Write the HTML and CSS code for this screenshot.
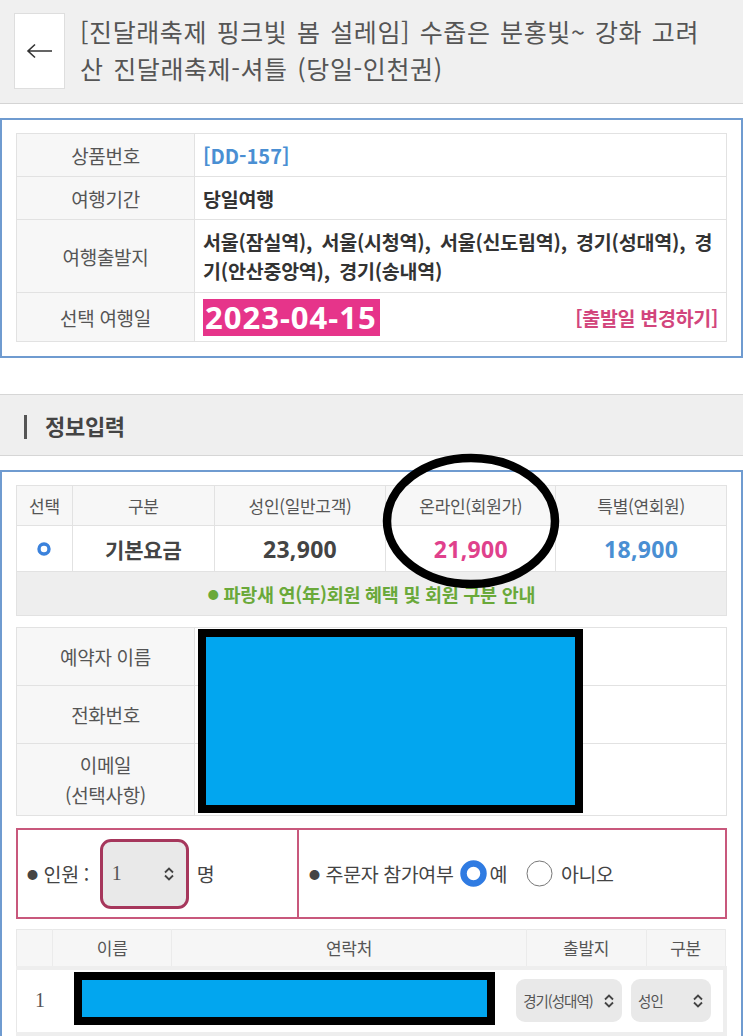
FILE: index.html
```html
<!DOCTYPE html>
<html lang="ko">
<head>
<meta charset="utf-8">
<title>정보입력</title>
<link rel="stylesheet" href="styles.css">
</head>
<body>
<header class="header">
  <div class="back"><svg width="28" height="16" viewBox="0 0 28 16"><path d="M2 8 H26 M9 1.5 L2 8 L9 14.5" fill="none" stroke="#333" stroke-width="1.6"/></svg></div>
  <h1 class="title">[진달래축제 핑크빛 봄 설레임] 수줍은 분홍빛~ 강화 고려산 진달래축제-셔틀 (당일-인천권)</h1>
</header>

<section class="box box-top">
  <table class="info">
    <tr class="r1"><th>상품번호</th><td><span class="code">[DD-157]</span></td></tr>
    <tr class="r2"><th>여행기간</th><td class="val">당일여행</td></tr>
    <tr class="r3"><th>여행출발지</th><td class="val multi">서울(잠실역), 서울(시청역), 서울(신도림역), 경기(성대역), 경기(안산중앙역), 경기(송내역)</td></tr>
    <tr class="r4"><th>선택 여행일</th><td><div class="daterow"><span class="date">2023-04-15</span><span class="change">[출발일 변경하기]</span></div></td></tr>
  </table>
</section>

<div class="sec-head"><span class="bar"></span><span class="sec-title">정보입력</span></div>

<section class="box box-form">
  <table class="price">
    <colgroup><col class="c1"><col class="c2"><col class="c3"><col class="c4"><col class="c5"></colgroup>
    <tr class="ph"><th>선택</th><th>구분</th><th>성인(일반고객)</th><th>온라인(회원가)</th><th>특별(연회원)</th></tr>
    <tr class="pd">
      <td><svg class="dot" width="14" height="14" viewBox="0 0 14 14"><circle cx="7" cy="7" r="5" fill="#fff" stroke="#3b82dc" stroke-width="3.4"/></svg></td>
      <td class="kind">기본요금</td>
      <td class="num">23,900</td>
      <td class="num pink">21,900</td>
      <td class="num blue">18,900</td>
    </tr>
    <tr class="pn"><td colspan="5"><span class="gbul">●</span> 파랑새 연(年)회원 혜택 및 회원 구분 안내</td></tr>
  </table>

  <table class="info person">
    <tr class="q1"><th>예약자 이름</th><td></td></tr>
    <tr class="q2"><th>전화번호</th><td></td></tr>
    <tr class="q3"><th>이메일<br>(선택사항)</th><td></td></tr>
  </table>

  <div class="pinkbox">
    <div class="pcell left">
      <span class="bul">●</span><span>인원 :</span>
      <div class="sel big"><span>1</span><svg width="12" height="16" viewBox="0 0 12 16"><path d="M2 6.5 L6 2.5 L10 6.5 M2 9.5 L6 13.5 L10 9.5" fill="none" stroke="#444" stroke-width="1.8"/></svg></div>
      <span>명</span>
    </div>
    <div class="pcell right">
      <span class="bul">●</span><span>주문자 참가여부</span>
      <svg class="radio" width="27" height="27" viewBox="0 0 27 27"><circle cx="13.5" cy="13.5" r="10" fill="#fff" stroke="#2f7be2" stroke-width="6.5"/></svg><span class="yes">예</span>
      <svg class="radio no" width="27" height="27" viewBox="0 0 27 27"><circle cx="13.5" cy="13.5" r="12.5" fill="#fff" stroke="#777" stroke-width="1"/></svg><span>아니오</span>
    </div>
  </div>

  <table class="people">
    <colgroup><col class="d1"><col class="d2"><col class="d3"><col class="d4"><col class="d5"></colgroup>
    <tr class="eh"><th></th><th>이름</th><th>연락처</th><th>출발지</th><th>구분</th></tr>
    <tr class="ed">
      <td class="no">1</td>
      <td></td>
      <td></td>
      <td><div class="sel small w1"><span>경기(성대역)</span><svg width="12" height="16" viewBox="0 0 12 16"><path d="M2 6.5 L6 2.5 L10 6.5 M2 9.5 L6 13.5 L10 9.5" fill="none" stroke="#444" stroke-width="1.8"/></svg></div></td>
      <td><div class="sel small w2"><span>성인</span><svg width="12" height="16" viewBox="0 0 12 16"><path d="M2 6.5 L6 2.5 L10 6.5 M2 9.5 L6 13.5 L10 9.5" fill="none" stroke="#444" stroke-width="1.8"/></svg></div></td>
    </tr>
  </table>
</section>

<div class="redact r-a"></div>
<div class="redact r-b"></div>
<svg class="ring" width="182" height="136" viewBox="0 0 182 136"><ellipse cx="91" cy="68" rx="84" ry="63" fill="none" stroke="#000" stroke-width="8.5"/></svg>
</body>
</html>
```

FILE: styles.css
```css
html, body {
  margin: 0;
  padding: 0;
}
body {
  width: 743px;
  font-family: "Noto Sans CJK KR", "Noto Sans", sans-serif;
  color: #444;
  background: #fff;
  overflow: hidden;
}
.header {
  box-sizing: border-box;
  height: 104px;
  background: #f0f0f0;
  border-bottom: 1px solid #d4d4d4;
  display: flex;
  align-items: flex-start;
  padding: 13px 0 0 14px;
}
.back {
  box-sizing: border-box;
  flex: none;
  width: 51px;
  height: 76px;
  background: #fff;
  border: 1px solid #dedede;
  display: flex;
  align-items: center;
  justify-content: center;
}
.title {
  margin: 0 0 0 15px;
  width: 632px;
  font-size: 25px;
  font-weight: 400;
  line-height: 37px;
  letter-spacing: 0.6px;
  word-spacing: 2px;
  color: #555;
}
.box {
  border: 2px solid #6f9bd0;
  padding: 13px 14px 14px;
}
.box-top {
  margin-top: 14px;
}
table {
  border-collapse: collapse;
  width: 100%;
}
.info {
  border: 1px solid #e2e2e2;
}
.info th, .info td {
  border: 1px solid #e2e2e2;
  padding: 0;
}
.info th {
  width: 177px;
  background: #f7f7f7;
  font-weight: 400;
  font-size: 19px;
  color: #555;
  text-align: center;
  letter-spacing: -0.3px;
}
.info td {
  padding: 0 8px;
  text-align: left;
}
.r1 { height: 43px; }
.r2 { height: 43px; }
.r3 { height: 73px; }
.r4 { height: 49px; }
.code {
  color: #4a8fd3;
  font-weight: 700;
  font-size: 20px;
}
.val {
  font-weight: 700;
  font-size: 19.5px;
  color: #333;
  letter-spacing: -0.2px;
  word-spacing: 4px;
}
.multi {
  line-height: 29px;
}
.daterow {
  display: flex;
  align-items: center;
  justify-content: space-between;
}
.date {
  background: #e6348a;
  color: #fff;
  font-weight: 700;
  font-size: 31px;
  line-height: 37px;
  padding: 0 3px 0 2px;
  font-family: "Noto Sans", sans-serif;
  letter-spacing: 1px;
}
.change {
  color: #d2457c;
  font-weight: 700;
  font-size: 19.5px;
  letter-spacing: -0.3px;
}
.sec-head {
  box-sizing: border-box;
  margin-top: 36px;
  height: 62px;
  background: #efefef;
  border-top: 1px solid #d6d6d6;
  border-bottom: 1px solid #d6d6d6;
  display: flex;
  align-items: center;
  padding-left: 24px;
}
.bar {
  width: 3px;
  height: 24px;
  background: #555;
  margin-right: 18px;
  margin-top: 4px;
}
.sec-title {
  font-weight: 700;
  font-size: 22px;
  color: #444;
  letter-spacing: -0.3px;
}
.box-form {
  margin-top: 14px;
  padding-bottom: 40px;
}
.price {
  border: 1px solid #e2e2e2;
}
.price th, .price td {
  border: 1px solid #e2e2e2;
  text-align: center;
  padding: 0;
}
.c1 { width: 56px; }
.c2 { width: 142px; }
.c3 { width: 172px; }
.c4 { width: 170px; }
.c5 { width: 171px; }
.ph { height: 40px; }
.ph th {
  background: #f7f7f7;
  font-weight: 400;
  font-size: 17px;
  color: #555;
  letter-spacing: -0.3px;
}
.pd { height: 46px; }
.pd td {
  font-weight: 700;
  font-size: 21px;
  color: #444;
}
.dot { display: block; margin: 0 auto; }
.kind { letter-spacing: -0.2px; }
.num {
  font-family: "Noto Sans", sans-serif;
  font-size: 23px !important;
  letter-spacing: 0.3px;
}
.pink { color: #e0418c !important; }
.blue { color: #4a8fd3 !important; }
.pn { height: 44px; }
.pn td {
  background: #eeeeee;
  color: #6aa93a;
  font-weight: 700;
  font-size: 18.5px;
  letter-spacing: -0.3px;
}
.gbul {
  font-size: 11px;
  vertical-align: 3px;
}
.person {
  margin-top: 11px;
}
.q1 { height: 58px; }
.q2 { height: 58px; }
.q3 { height: 72px; }
.q3 th { line-height: 30px; }
.pinkbox {
  margin-top: 12px;
  height: 91px;
  box-sizing: border-box;
  border: 2px solid #c8587c;
  display: flex;
}
.pcell {
  display: flex;
  align-items: center;
  font-size: 19.5px;
  color: #444;
  letter-spacing: -0.4px;
}
.pcell.left {
  box-sizing: border-box;
  flex: none;
  width: 281px;
  border-right: 2px solid #c8587c;
  padding-left: 9px;
}
.pcell.right {
  padding-left: 10px;
}
.bul {
  font-size: 11px;
  margin-right: 6px;
}
.sel {
  box-sizing: border-box;
  display: flex;
  align-items: center;
  justify-content: space-between;
  background: #e9e9e9;
  color: #555;
}
.sel.big {
  width: 89px;
  height: 70px;
  border: 3px solid #a6375c;
  border-radius: 11px;
  margin: 0 8px 0 11px;
  padding: 0 11px 0 9px;
  font-family: "Liberation Serif", serif;
  font-size: 20px;
}
.radio { margin: 0 2px 0 7px; flex: none; }
.radio.no { margin-left: 1px; margin-right: 8px; }
.people {
  margin-top: 10px;
  border: 1px solid #e8e8e8;
}
.d1 { width: 36px; }
.d2 { width: 120px; }
.d3 { width: 356px; }
.d4 { width: 120px; }
.d5 { width: 79px; }
.eh { height: 38px; }
.eh th {
  background: #f6f6f6;
  border-right: 1px solid #ebebeb;
  font-weight: 400;
  font-size: 17px;
  color: #555;
  letter-spacing: -0.3px;
}
.ed { height: 66px; }
.ed td {
  background: #fff;
  border-top: 4px solid #eeeeee;
  border-bottom: 4px solid #eeeeee;
  padding: 0;
}
.ed td:last-child {
  border-right: 4px solid #eeeeee;
}
.no {
  font-family: "Liberation Serif", serif;
  font-size: 20px;
  color: #555;
  padding-left: 18px !important;
}
.sel.small {
  height: 43px;
  border-radius: 9px;
  font-size: 14.5px;
  letter-spacing: -1px;
  padding: 0 7px 0 7px;
  white-space: nowrap;
}
.sel.small svg { flex: none; }
.w1 { width: 106px; margin-left: -10px; }
.w2 { width: 80px; margin-left: -15px; font-size: 16.5px; padding-left: 10px; }
.redact {
  position: absolute;
  box-sizing: border-box;
  background: #02a6ef;
  border: 8px solid #000;
}
.r-a {
  left: 198px;
  top: 629px;
  width: 385px;
  height: 184px;
}
.r-b {
  left: 74px;
  top: 972px;
  width: 421px;
  height: 53px;
}
.ring {
  position: absolute;
  left: 380px;
  top: 453px;
}
```
